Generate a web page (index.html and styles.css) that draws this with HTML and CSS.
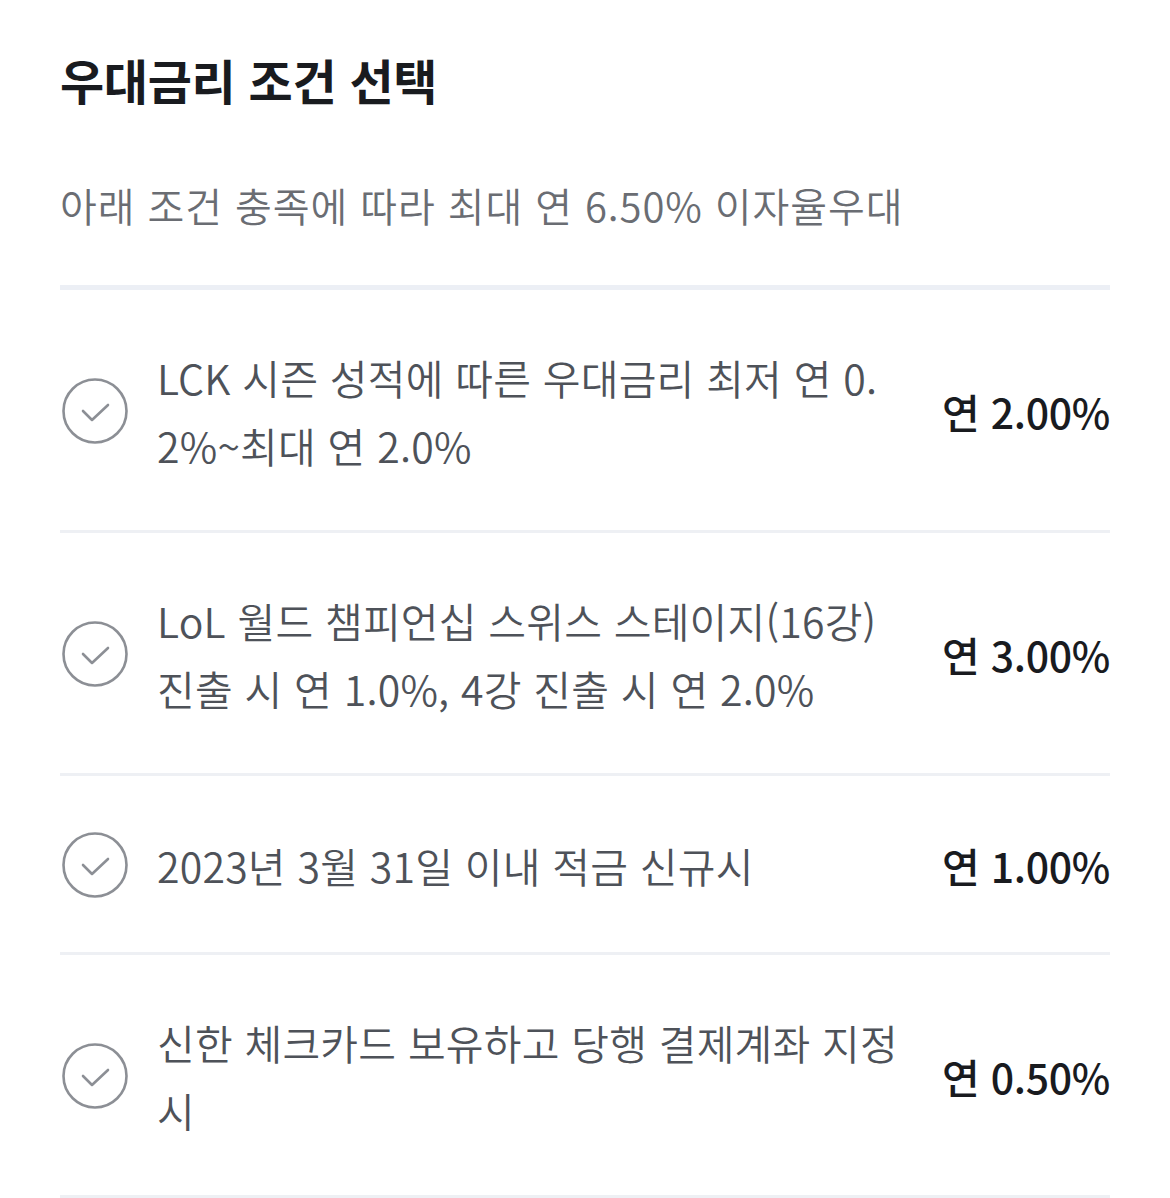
FILE: index.html
```html
<!DOCTYPE html>
<html lang="ko">
<head>
    <meta charset="UTF-8">
    <meta name="viewport" content="width=device-width, initial-scale=1.0">
    <title>우대금리 조건 선택</title>
    <link rel="stylesheet" href="styles.css">
</head>
<body>
    <div class="page">
        <h1 class="title">우대금리 조건 선택</h1>
        <p class="desc">아래 조건 충족에 따라 최대 연 6.50% 이자율우대</p>

        <ul class="cond-list">
            <li class="cond">
                <span class="check">
                    <svg viewBox="0 0 66 66" width="66" height="66"><circle cx="33" cy="33" r="31.5" fill="none" stroke="#8c8f95" stroke-width="2.6"/><path d="M21 33 L30 42 L46 27" fill="none" stroke="#8c8f95" stroke-width="2.6" stroke-linecap="round" stroke-linejoin="round"/></svg>
                </span>
                <span class="cond-text">LCK 시즌 성적에 따른 우대금리 최저 연 0.2%~최대 연 2.0%</span>
                <span class="cond-rate">연 2.00%</span>
            </li>
            <li class="cond">
                <span class="check">
                    <svg viewBox="0 0 66 66" width="66" height="66"><circle cx="33" cy="33" r="31.5" fill="none" stroke="#8c8f95" stroke-width="2.6"/><path d="M21 33 L30 42 L46 27" fill="none" stroke="#8c8f95" stroke-width="2.6" stroke-linecap="round" stroke-linejoin="round"/></svg>
                </span>
                <span class="cond-text">LoL 월드 챔피언십 스위스 스테이지(16강) 진출 시 연 1.0%, 4강 진출 시 연 2.0%</span>
                <span class="cond-rate">연 3.00%</span>
            </li>
            <li class="cond">
                <span class="check">
                    <svg viewBox="0 0 66 66" width="66" height="66"><circle cx="33" cy="33" r="31.5" fill="none" stroke="#8c8f95" stroke-width="2.6"/><path d="M21 33 L30 42 L46 27" fill="none" stroke="#8c8f95" stroke-width="2.6" stroke-linecap="round" stroke-linejoin="round"/></svg>
                </span>
                <span class="cond-text">2023년 3월 31일 이내 적금 신규시</span>
                <span class="cond-rate">연 1.00%</span>
            </li>
            <li class="cond">
                <span class="check">
                    <svg viewBox="0 0 66 66" width="66" height="66"><circle cx="33" cy="33" r="31.5" fill="none" stroke="#8c8f95" stroke-width="2.6"/><path d="M21 33 L30 42 L46 27" fill="none" stroke="#8c8f95" stroke-width="2.6" stroke-linecap="round" stroke-linejoin="round"/></svg>
                </span>
                <span class="cond-text">신한 체크카드 보유하고 당행 결제계좌 지정시</span>
                <span class="cond-rate">연 0.50%</span>
            </li>
        </ul>
    </div>
</body>
</html>
```

FILE: styles.css
```css
body { margin: 0; background: #fff; font-family: "Noto Sans CJK KR", "Noto Sans", sans-serif; }
.page { padding: 44px 60px 0; }
.title { margin: 0; font-size: 48px; font-weight: 700; color: #191b1f; letter-spacing: -0.3px; line-height: 70px; }
.desc { margin: 66px 0 0; font-size: 40px; font-weight: 350; color: #6a6d73; letter-spacing: 0.9px; line-height: 50px; padding-bottom: 55px; border-bottom: 5px solid #eceff5; }
.cond-list { list-style: none; margin: 0; padding: 0; }
.cond { display: flex; align-items: center; padding: 53px 0 51px; border-bottom: 3px solid #eef0f4; }
.cond:nth-child(3) { padding: 55px 0 53px; }
.check { width: 66px; height: 66px; flex: none; margin: 0 32px 0 2px; }
.check svg { display: block; }
.cond-text { flex: 1; font-size: 41px; font-weight: 350; line-height: 68px; color: #4e5259; letter-spacing: 0.2px; padding-right: 35px; word-break: break-all; margin-left: -3px; }
.cond-rate { flex: none; font-size: 41px; font-weight: 500; color: #191b1f; letter-spacing: -0.3px; }
```
